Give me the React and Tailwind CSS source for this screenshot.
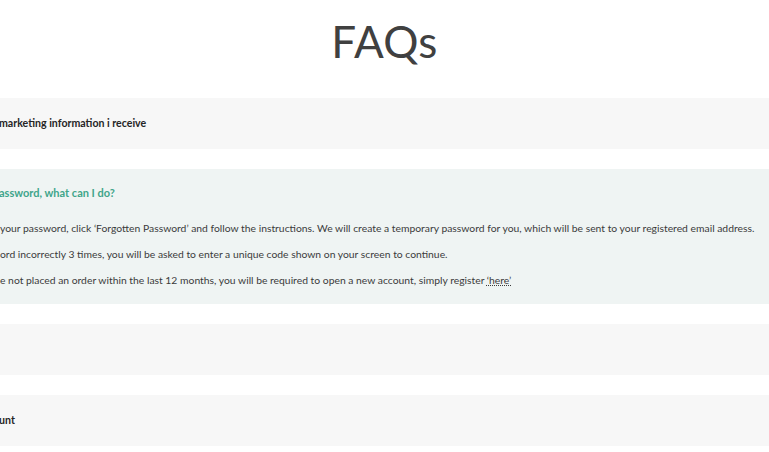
export default function App() {
  return (
    <div
      className="w-[769px] h-[452px] overflow-hidden bg-white"
      style={{ fontFamily: "Lato, 'Open Sans', sans-serif" }}
    >
      <div className="h-[98px] flex justify-center pt-[19px]">
        <h1 className="text-[44px] leading-none font-normal text-[#404040] tracking-[0.3px]">FAQs</h1>
      </div>
      <div className="flex flex-col gap-[20px]">
        <div className="h-[51px] bg-[#f7f7f7] flex items-center">
          <p className="-ml-[1px] text-[10.6px] font-bold text-[#252525] whitespace-nowrap">marketing information i receive</p>
        </div>
        <div className="h-[135px] bg-[#eff4f3] pt-[17px]">
          <p className="-ml-[1px] text-[11px] font-bold text-[#3fa58a] whitespace-nowrap leading-[14px]">assword, what can I do?</p>
          <div className="mt-[21px] flex flex-col gap-[12px] text-[10.35px] text-[#3b3b3b] leading-[14px] whitespace-nowrap">
            <p>your password, click ‘Forgotten Password’ and follow the instructions. We will create a temporary password for you, which will be sent to your registered email address.</p>
            <p>ord incorrectly 3 times, you will be asked to enter a unique code shown on your screen to continue.</p>
            <p>e not placed an order within the last 12 months, you will be required to open a new account, simply register <a className="underline decoration-dotted">‘here’</a></p>
          </div>
        </div>
        <div className="h-[51px] bg-[#f7f7f7]"></div>
        <div className="h-[51px] bg-[#f7f7f7] flex items-center">
          <p className="-ml-[1px] text-[10.6px] font-bold text-[#252525] whitespace-nowrap">unt</p>
        </div>
      </div>
    </div>
  );
}
